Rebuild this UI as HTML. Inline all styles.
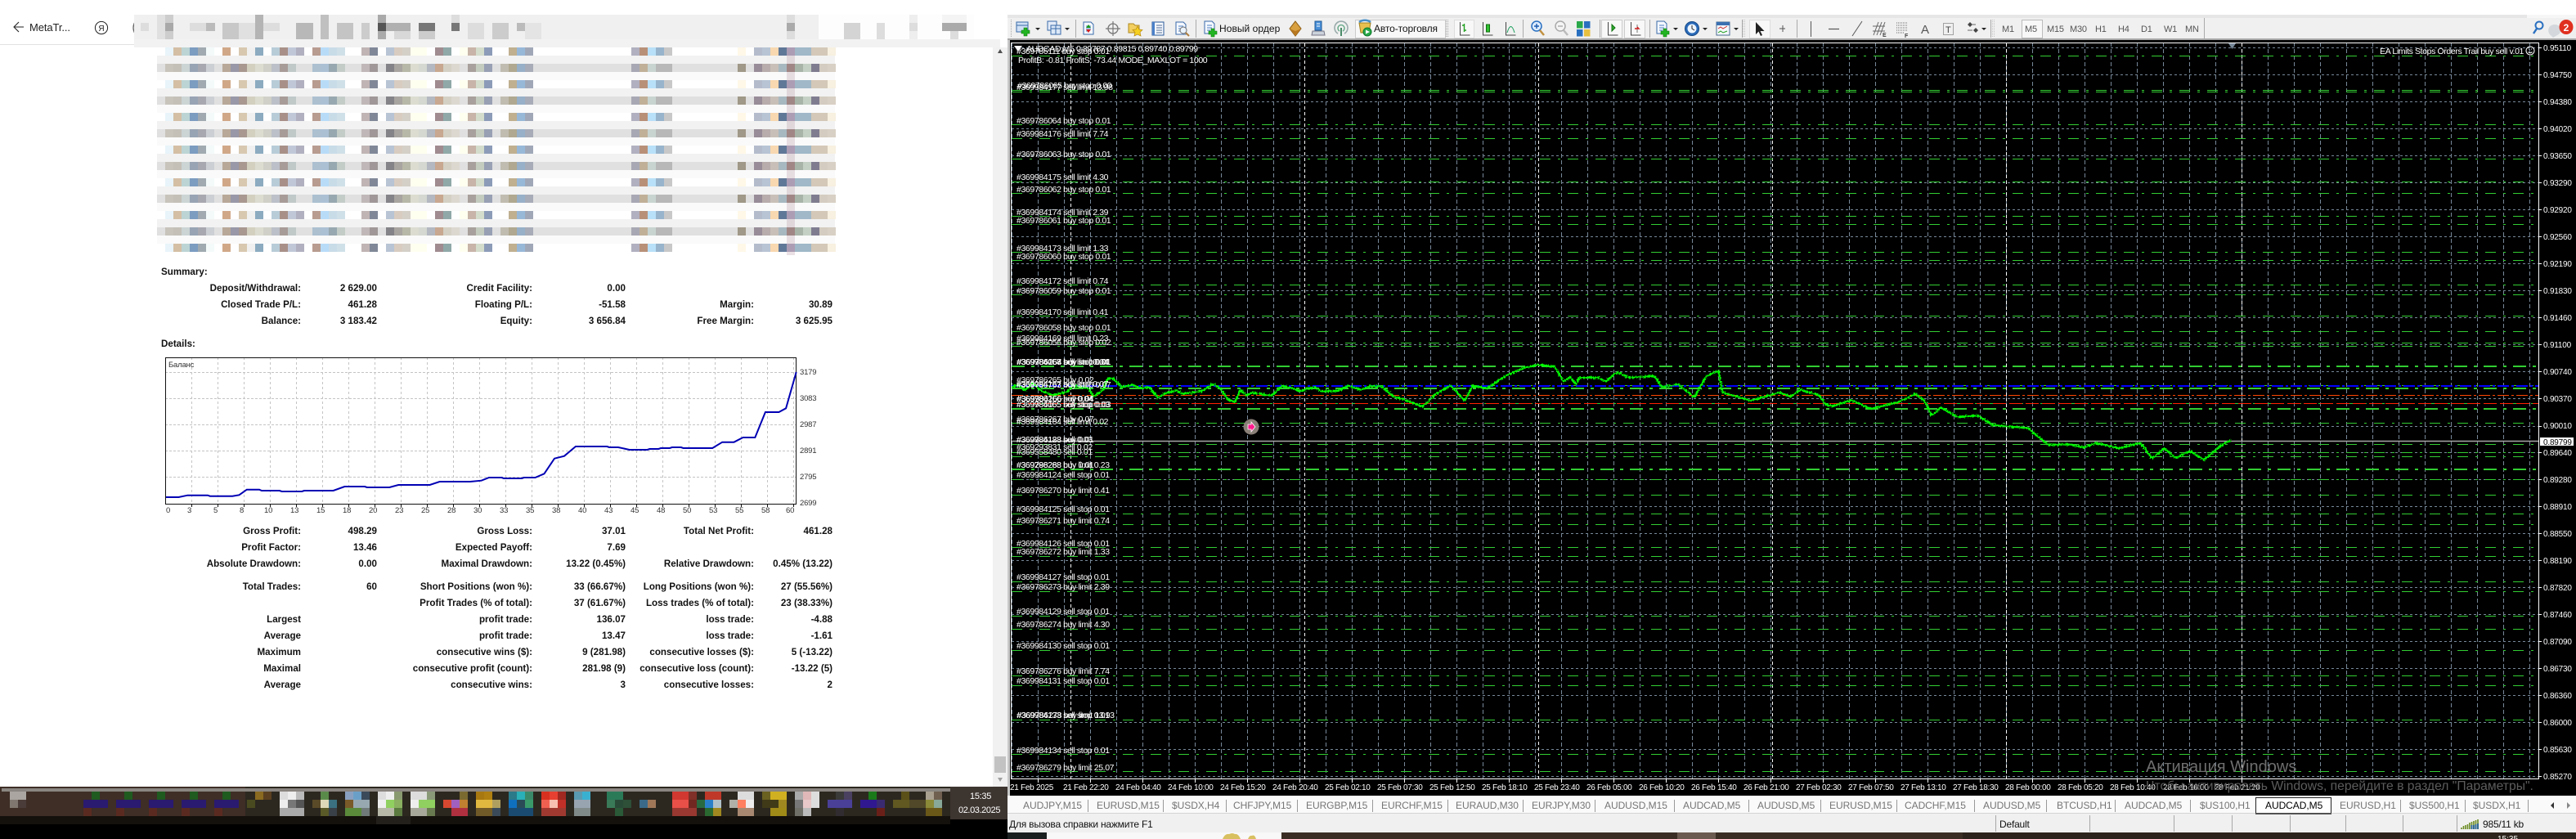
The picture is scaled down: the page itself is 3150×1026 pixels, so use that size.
<!DOCTYPE html>
<html lang="ru"><head><meta charset="utf-8"><title>MetaTrader</title>
<style>
html,body{margin:0;padding:0;background:#fff;width:3150px;height:1026px;overflow:hidden}
svg{display:block}
text{font-family:"Liberation Sans",sans-serif}
.m rect{width:10px;height:10px}
.t10 rect{height:10px}
.b{font-weight:700;font-size:11.6px;fill:#111;text-anchor:end}
.bl{font-weight:700;font-size:11.6px;fill:#111}
.o{font-size:10.5px;fill:#fff;letter-spacing:-.38px}
.ax{font-size:10px;fill:#fff;letter-spacing:-.2px}
.tm{font-size:10px;fill:#fff;letter-spacing:-.28px}
.tab{font-size:12px;fill:#757575;letter-spacing:-.05px}
.tf{font-size:11px;fill:#555;letter-spacing:-.2px}
.eq{font-size:9.5px;fill:#333;letter-spacing:-.2px}
.ol{stroke:#32cd32;stroke-width:1;stroke-dasharray:13 9 3 9;fill:none}
.ok{stroke:#32cd32;stroke-width:2;stroke-dasharray:16 8 4 8;fill:none}
.sep{stroke:#aaa;stroke-width:1}
</style></head><body>
<svg width="3150" height="1026" viewBox="0 0 3150 1026" xmlns="http://www.w3.org/2000/svg">
<defs>
<g id="A" class="m">
<rect x="202" fill="#e8f4fa"/><rect x="212" fill="#d4bfa5"/><rect x="222" fill="#bcd4d4"/><rect x="232" fill="#7c9cc0"/><rect x="242" fill="#a0aab0"/><rect x="252" fill="#f4fafa"/><rect x="272" fill="#d0a888"/><rect x="292" fill="#d8c8b0"/><rect x="302" fill="#f0f0f0"/><rect x="312" fill="#8cabc0"/><rect x="332" fill="#b8ccd8"/><rect x="342" fill="#a89088"/><rect x="352" fill="#c0c8d8"/><rect x="362" fill="#b0b0c0"/><rect x="382" fill="#b89c90"/><rect x="392" fill="#b8dcf8"/><rect x="402" fill="#c8dce8"/><rect x="412" fill="#d0e0e8"/><rect x="442" fill="#c0b4b4"/><rect x="452" fill="#808898"/><rect x="472" fill="#b8c4d4"/><rect x="482" fill="#d8ccc0"/><rect x="492" fill="#d4d0c8"/><rect x="502" fill="#fffff0"/><rect x="512" fill="#fffff0"/><rect x="532" fill="#a08c90"/><rect x="542" fill="#90a8a8"/><rect x="562" fill="#fffff0"/><rect x="572" fill="#c8b4a8"/><rect x="582" fill="#d4dccc"/><rect x="592" fill="#8c9cb8"/><rect x="622" fill="#c0b090"/><rect x="632" fill="#98b8d8"/><rect x="642" fill="#a0a8b8"/><rect x="772" fill="#b0b0c0"/><rect x="782" fill="#b89078"/><rect x="792" fill="#b8e0f8"/><rect x="802" fill="#98b4cc"/><rect x="812" fill="#c8c8c8"/><rect x="902" fill="#fff8e8"/><rect x="922" fill="#b4bccc"/><rect x="932" fill="#b8c4d4"/><rect x="942" fill="#f8d8b0"/><rect x="952" fill="#607898"/><rect x="962" fill="#b0a8c0"/><rect x="972" fill="#a0b8c8"/><rect x="982" fill="#a0b8c8"/><rect x="992" fill="#d4c8b8"/><rect x="1002" fill="#d4c8b8"/><rect x="1012" fill="#f8f0e0"/>
</g>
<g id="B" class="m">
<rect x="202" fill="#c8c4bc"/><rect x="212" fill="#c4c0b8"/><rect x="222" fill="#ccd4d4"/><rect x="232" fill="#98a4b4"/><rect x="242" fill="#a8a8b0"/><rect x="252" fill="#ccd0d4"/><rect x="272" fill="#b8a898"/><rect x="282" fill="#9898a8"/><rect x="292" fill="#a89890"/><rect x="302" fill="#d4d0c0"/><rect x="312" fill="#dcdcd0"/><rect x="322" fill="#d0d0c8"/><rect x="332" fill="#bcc0c8"/><rect x="342" fill="#a89c98"/><rect x="352" fill="#c0c8c8"/><rect x="382" fill="#acc0d0"/><rect x="392" fill="#acc0d4"/><rect x="402" fill="#98a8b0"/><rect x="412" fill="#c4ccc8"/><rect x="442" fill="#c0b8b8"/><rect x="452" fill="#a09898"/><rect x="472" fill="#848488"/><rect x="482" fill="#a8a4a0"/><rect x="492" fill="#b8b8a8"/><rect x="502" fill="#dcdcd0"/><rect x="512" fill="#d4d8d0"/><rect x="522" fill="#b4b8c0"/><rect x="532" fill="#c8a890"/><rect x="542" fill="#d4d0c4"/><rect x="552" fill="#dcd8d0"/><rect x="572" fill="#a8a09c"/><rect x="582" fill="#c4ccc0"/><rect x="592" fill="#98a0b4"/><rect x="612" fill="#c0bcb0"/><rect x="622" fill="#b0a890"/><rect x="632" fill="#98b0c8"/><rect x="642" fill="#a8acb8"/><rect x="772" fill="#a8a8b4"/><rect x="782" fill="#c0b098"/><rect x="792" fill="#c8d4d0"/><rect x="802" fill="#b8b8b8"/><rect x="812" fill="#b8b8b8"/><rect x="902" fill="#a09888"/><rect x="922" fill="#988c98"/><rect x="932" fill="#b8acac"/><rect x="942" fill="#c8c0b8"/><rect x="952" fill="#a8b8c0"/><rect x="962" fill="#a08c84"/><rect x="972" fill="#a8b4a8"/><rect x="982" fill="#c4d0c4"/><rect x="992" fill="#807c90"/><rect x="1002" fill="#d4ccc0"/><rect x="1012" fill="#d8d0c4"/>
</g>
<g id="plus"><path d="M-2 -5h4v3h3v4h-3v3h-4v-3h-3v-4h3z" fill="#22b422" stroke="#0c7a0c" stroke-width=".6"/></g>
<g id="doc"><path d="M-6 -8h9l3 3v12h-12z" fill="#f4f8ff" stroke="#3a6aa8"/><path d="M-3 -3h6M-3 0h6M-3 3h4" stroke="#5080c0"/></g>
<pattern id="vg" x="1237" y="52" width="32" height="8" patternUnits="userSpaceOnUse"><path d="M.5 0v5" stroke="#778899"/></pattern>
<pattern id="vge" x="202" y="437" width="32" height="6" patternUnits="userSpaceOnUse"><path d="M.5 0v3" stroke="#c4c4c4"/></pattern>
<filter id="jit" x="-2%" y="-20%" width="104%" height="140%"><feTurbulence type="fractalNoise" baseFrequency=".55 .6" numOctaves="2" seed="4"/><feDisplacementMap in="SourceGraphic" scale="5" xChannelSelector="R" yChannelSelector="G"/></filter>
</defs>

<!-- page bg -->
<rect width="3150" height="1026" fill="#fff"/>

<!-- LEFT header -->
<path d="M0 54.5H164" stroke="#e2e2e2"/>
<path d="M29 33H18M23 27l-6 6 6 6" fill="none" stroke="#222" stroke-width="1.1"/>
<text x="36" y="38" font-size="13" fill="#222" letter-spacing="-.1">MetaTr...</text>
<circle cx="124" cy="34" r="7.6" fill="none" stroke="#222" stroke-width="1"/><text x="124" y="38" font-size="10" fill="#222" text-anchor="middle" font-family="Liberation Sans">Я</text>
<path d="M165 27q-4 7 0 14" fill="none" stroke="#666" stroke-width="1.3"/>
<rect x="164" y="18" width="837" height="30" fill="#f0f0f0"/>
<rect x="164" y="48" width="1059" height="10" fill="#f2f2f2"/>
<rect x="1001" y="18" width="190" height="30" fill="#fdfdfd"/>
<g>
<rect x="192" y="18" width="20" height="30" fill="#e0e0e0"/><rect x="202" y="28" width="10" height="10" fill="#888"/><rect x="202" y="18" width="10" height="30" fill="#c0c0c0" opacity=".6"/>
<rect x="172" y="28" width="10" height="10" fill="#ddd"/><rect x="232" y="28" width="30" height="10" fill="#ddd"/><rect x="252" y="28" width="11" height="10" fill="#bbb"/>
<rect x="272" y="28" width="20" height="20" fill="#c8c8c8"/><rect x="292" y="28" width="20" height="20" fill="#e0e0e0"/><rect x="312" y="18" width="10" height="30" fill="#b4b4b4"/><rect x="322" y="28" width="20" height="10" fill="#ddd"/>
<rect x="362" y="28" width="21" height="20" fill="#b8b8b8"/><rect x="392" y="18" width="10" height="30" fill="#c0c0c0"/><rect x="412" y="28" width="20" height="20" fill="#c4c4c4"/><rect x="442" y="28" width="10" height="20" fill="#ccc"/>
<rect x="462" y="18" width="10" height="30" fill="#aaa"/><rect x="462" y="28" width="10" height="10" fill="#555"/><rect x="472" y="28" width="30" height="10" fill="#b0b0b0"/><rect x="482" y="38" width="20" height="10" fill="#d8d8d8"/>
<rect x="512" y="28" width="20" height="20" fill="#ccc"/><rect x="512" y="28" width="20" height="10" fill="#777"/><rect x="552" y="18" width="10" height="10" fill="#ddd"/><rect x="552" y="28" width="10" height="10" fill="#777"/>
<rect x="572" y="28" width="20" height="20" fill="#ddd"/><rect x="602" y="28" width="20" height="20" fill="#ccc"/><rect x="632" y="28" width="10" height="10" fill="#bbb"/><rect x="642" y="28" width="20" height="20" fill="#e4e4e4"/>
<rect x="962" y="18" width="10" height="30" fill="#ddd"/><rect x="962" y="28" width="10" height="10" fill="#aaa"/>
<rect x="1032" y="28" width="20" height="20" fill="#d4d4d4"/><rect x="1072" y="28" width="10" height="20" fill="#ddd"/><rect x="1112" y="18" width="10" height="30" fill="#eee"/><rect x="1112" y="28" width="10" height="10" fill="#ddd"/>
<rect x="1152" y="18" width="30" height="10" fill="#f4f4f4"/><rect x="1152" y="28" width="30" height="10" fill="#aaa"/><rect x="1162" y="38" width="10" height="10" fill="#ddd"/>
</g>

<!-- LEFT mosaic -->
<rect x="192" y="68" width="829" height="10" fill="#f2f2f2"/><rect x="192" y="78" width="829" height="10" fill="#e0e0e0"/><rect x="192" y="88" width="829" height="10" fill="#fafafa"/>
<rect x="192" y="108" width="829" height="10" fill="#f2f2f2"/>
<rect x="192" y="118" width="829" height="10" fill="#e0e0e0"/><rect x="192" y="128" width="829" height="10" fill="#fafafa"/>
<rect x="192" y="148" width="829" height="10" fill="#f2f2f2"/><rect x="192" y="158" width="829" height="10" fill="#e0e0e0"/><rect x="192" y="168" width="829" height="10" fill="#fafafa"/>
<rect x="192" y="188" width="829" height="10" fill="#f2f2f2"/><rect x="192" y="198" width="829" height="10" fill="#e0e0e0"/><rect x="192" y="208" width="829" height="10" fill="#fafafa"/>
<rect x="192" y="228" width="829" height="10" fill="#f2f2f2"/><rect x="192" y="238" width="829" height="10" fill="#e0e0e0"/><rect x="192" y="248" width="829" height="10" fill="#fafafa"/>
<rect x="192" y="268" width="829" height="10" fill="#f2f2f2"/><rect x="192" y="278" width="829" height="10" fill="#e0e0e0"/><rect x="192" y="288" width="829" height="10" fill="#fafafa"/>
<use href="#A" y="58"/><use href="#A" y="98"/><use href="#A" y="138"/><use href="#A" y="178"/><use href="#A" y="218"/><use href="#A" y="258"/><use href="#A" y="298"/>
<use href="#B" y="78"/><use href="#B" y="118"/><use href="#B" y="158"/><use href="#B" y="198"/><use href="#B" y="238"/><use href="#B" y="278"/>
<rect x="962" y="58" width="10" height="254" fill="#a07888" opacity=".22"/>

<!-- LEFT scrollbar -->
<rect x="1214" y="58" width="18" height="904" fill="#f1f1f1"/>
<path d="M1223 60l-3 5h6z" fill="#505050"/>
<rect x="1216" y="925" width="14" height="20" fill="#c2c2c2"/>
<path d="M1220 951h6l-3 5z" fill="#a0a0a0"/>

<!-- Summary -->
<text class="bl" x="197" y="336">Summary:</text>
<text class="b" x="368" y="356">Deposit/Withdrawal:</text><text class="b" x="461" y="356">2 629.00</text>
<text class="b" x="651" y="356">Credit Facility:</text><text class="b" x="765" y="356">0.00</text>
<text class="b" x="368" y="376">Closed Trade P/L:</text><text class="b" x="461" y="376">461.28</text>
<text class="b" x="651" y="376">Floating P/L:</text><text class="b" x="765" y="376">-51.58</text>
<text class="b" x="922" y="376">Margin:</text><text class="b" x="1018" y="376">30.89</text>
<text class="b" x="368" y="396">Balance:</text><text class="b" x="461" y="396">3 183.42</text>
<text class="b" x="651" y="396">Equity:</text><text class="b" x="765" y="396">3 656.84</text>
<text class="b" x="922" y="396">Free Margin:</text><text class="b" x="1018" y="396">3 625.95</text>
<text class="bl" x="197" y="424">Details:</text>

<!-- Equity chart -->
<rect x="202" y="437" width="772" height="179" fill="url(#vge)"/>
<path d="M202 455.5H974M202 487.5H974M202 519.5H974M202 551.5H974M202 583.5H974" stroke="#c4c4c4" stroke-dasharray="3 2"/>
<rect x="202.5" y="437.5" width="771" height="179" fill="none" stroke="#111"/>
<path d="M234.5 617v3M266.5 617v3M298.5 617v3M330.5 617v3M362.5 617v3M394.5 617v3M426.5 617v3M458.5 617v3M490.5 617v3M522.5 617v3M554.5 617v3M586.5 617v3M618.5 617v3M650.5 617v3M682.5 617v3M714.5 617v3M746.5 617v3M778.5 617v3M810.5 617v3M842.5 617v3M874.5 617v3M906.5 617v3M938.5 617v3M970.5 617v3" stroke="#111"/>
<polyline fill="none" stroke="#0000b4" stroke-width="2" points="203,608 218.4,608 229.4,605.7 254,605.7 256.8,606.7 284.2,606.7 292.5,605.3 301.8,598.7 317.1,598.7 319.9,600 341.8,600 344.6,601 369.2,601 372,600 407.6,600 421.4,595 446,595 448.8,596 476.2,596 487.2,593 525.6,593 537.6,589 575,589 588.7,587.7 598,584 613.4,584 616.1,585 638,585 640.8,584 654.5,584 665.5,579.3 678,560.7 690,557.7 703.9,546 742.3,546 745,547 756,547 769.7,550 791.6,550 794.4,549 805.3,549 808.1,548 819,548 821.8,547 832.8,547 835.5,548 871.2,548 883.2,540.7 897.5,540.7 908.5,535 923.3,535 935.9,504 952.4,504 961.1,499.3 973.7,455"/>
<text class="eq" x="206" y="449">Баланс</text>
<g class="eq">
<text class="eq" x="978" y="458">3179</text><text class="eq" x="978" y="490">3083</text><text class="eq" x="978" y="522">2987</text><text class="eq" x="978" y="554">2891</text><text class="eq" x="978" y="586">2795</text><text class="eq" x="978" y="618">2699</text>
<text class="eq" x="203" y="627">0</text><text class="eq" x="229" y="627">3</text><text class="eq" x="261" y="627">5</text><text class="eq" x="293" y="627">8</text><text class="eq" x="323" y="627">10</text><text class="eq" x="355" y="627">13</text><text class="eq" x="387" y="627">15</text><text class="eq" x="419" y="627">18</text><text class="eq" x="451" y="627">20</text><text class="eq" x="483" y="627">23</text><text class="eq" x="515" y="627">25</text><text class="eq" x="547" y="627">28</text><text class="eq" x="579" y="627">30</text><text class="eq" x="611" y="627">33</text><text class="eq" x="643" y="627">35</text><text class="eq" x="675" y="627">38</text><text class="eq" x="707" y="627">40</text><text class="eq" x="739" y="627">43</text><text class="eq" x="771" y="627">45</text><text class="eq" x="803" y="627">48</text><text class="eq" x="835" y="627">50</text><text class="eq" x="867" y="627">53</text><text class="eq" x="899" y="627">55</text><text class="eq" x="931" y="627">58</text><text class="eq" x="961" y="627">60</text>
</g>

<!-- Stats -->
<text class="b" x="368" y="653">Gross Profit:</text><text class="b" x="461" y="653">498.29</text><text class="b" x="651" y="653">Gross Loss:</text><text class="b" x="765" y="653">37.01</text><text class="b" x="922" y="653">Total Net Profit:</text><text class="b" x="1018" y="653">461.28</text>
<text class="b" x="368" y="673">Profit Factor:</text><text class="b" x="461" y="673">13.46</text><text class="b" x="651" y="673">Expected Payoff:</text><text class="b" x="765" y="673">7.69</text>
<text class="b" x="368" y="693">Absolute Drawdown:</text><text class="b" x="461" y="693">0.00</text><text class="b" x="651" y="693">Maximal Drawdown:</text><text class="b" x="765" y="693">13.22 (0.45%)</text><text class="b" x="922" y="693">Relative Drawdown:</text><text class="b" x="1018" y="693">0.45% (13.22)</text>
<text class="b" x="368" y="721">Total Trades:</text><text class="b" x="461" y="721">60</text><text class="b" x="651" y="721">Short Positions (won %):</text><text class="b" x="765" y="721">33 (66.67%)</text><text class="b" x="922" y="721">Long Positions (won %):</text><text class="b" x="1018" y="721">27 (55.56%)</text>
<text class="b" x="651" y="741">Profit Trades (% of total):</text><text class="b" x="765" y="741">37 (61.67%)</text><text class="b" x="922" y="741">Loss trades (% of total):</text><text class="b" x="1018" y="741">23 (38.33%)</text>
<text class="b" x="368" y="761">Largest</text><text class="b" x="651" y="761">profit trade:</text><text class="b" x="765" y="761">136.07</text><text class="b" x="922" y="761">loss trade:</text><text class="b" x="1018" y="761">-4.88</text>
<text class="b" x="368" y="781">Average</text><text class="b" x="651" y="781">profit trade:</text><text class="b" x="765" y="781">13.47</text><text class="b" x="922" y="781">loss trade:</text><text class="b" x="1018" y="781">-1.61</text>
<text class="b" x="368" y="801">Maximum</text><text class="b" x="651" y="801">consecutive wins ($):</text><text class="b" x="765" y="801">9 (281.98)</text><text class="b" x="922" y="801">consecutive losses ($):</text><text class="b" x="1018" y="801">5 (-13.22)</text>
<text class="b" x="368" y="821">Maximal</text><text class="b" x="651" y="821">consecutive profit (count):</text><text class="b" x="765" y="821">281.98 (9)</text><text class="b" x="922" y="821">consecutive loss (count):</text><text class="b" x="1018" y="821">-13.22 (5)</text>
<text class="b" x="368" y="841">Average</text><text class="b" x="651" y="841">consecutive wins:</text><text class="b" x="765" y="841">3</text><text class="b" x="922" y="841">consecutive losses:</text><text class="b" x="1018" y="841">2</text>

<!-- LEFT taskbar -->
<rect x="0" y="962" width="300" height="36" fill="#3e2e26"/><rect x="300" y="962" width="862" height="36" fill="#2c2820"/>
<rect x="0" y="998" width="1162" height="10" fill="#14100c"/><rect x="0" y="1008" width="1232" height="18" fill="#000"/>
<rect x="2" y="964" width="1160" height="4" fill="#8a8580"/>
<rect x="460" y="998" width="42" height="10" fill="#23201c"/>
<rect x="1162" y="962" width="70" height="40" fill="#3d3530"/><rect x="1162" y="1002" width="70" height="6" fill="#000"/>
<text x="1186" y="977" font-size="11" fill="#fff" letter-spacing="-.3">15:35</text>
<text x="1172" y="994" font-size="11" fill="#fff" letter-spacing="-.4">02.03.2025</text>
<g class="t10">
<g transform="translate(0,968)">
<rect x="12" width="20" fill="#aaa5a0"/><rect x="112" width="10" fill="#1f5a1f"/><rect x="152" width="10" fill="#1f5a1f"/><rect x="192" width="10" fill="#1f5a1f"/><rect x="232" width="10" fill="#1f5a1f"/><rect x="272" width="10" fill="#1f5a1f"/><rect x="312" width="10" fill="#8a6a20"/><rect x="322" width="10" fill="#5a4020"/><rect x="342" width="10" fill="#ddd"/><rect x="352" width="10" fill="#eee"/><rect x="362" width="10" fill="#bbb"/><rect x="392" width="10" fill="#5a8a4a"/><rect x="422" width="10" fill="#8aa0c0"/><rect x="432" width="10" fill="#6aa0c8"/><rect x="442" width="10" fill="#3a4a5a"/><rect x="462" width="10" fill="#ddd"/><rect x="472" width="10" fill="#eee"/><rect x="482" width="10" fill="#8a9a70"/><rect x="502" width="20" fill="#ddd"/><rect x="522" width="10" fill="#8a9a78"/><rect x="562" width="10" fill="#7a6a30"/><rect x="582" width="10" fill="#a87810"/><rect x="592" width="10" fill="#b08010"/><rect x="622" width="10" fill="#2a7a8a"/><rect x="632" width="10" fill="#2ab0b8"/><rect x="642" width="10" fill="#3a8a6a"/><rect x="662" width="10" fill="#d83020"/><rect x="672" width="10" fill="#e84030"/><rect x="682" width="10" fill="#a02820"/><rect x="702" width="10" fill="#5a9ab0"/><rect x="712" width="10" fill="#3ab0d0"/><rect x="742" width="20" fill="#2a7a58"/><rect x="822" width="20" fill="#d03830"/><rect x="842" width="10" fill="#803028"/><rect x="862" width="20" fill="#c03828"/><rect x="902" width="20" fill="#ddd"/><rect x="932" width="10" fill="#6a6020"/><rect x="942" width="20" fill="#d0b020"/><rect x="972" width="10" fill="#aaa"/><rect x="982" width="10" fill="#e0b8b8"/><rect x="992" width="10" fill="#ddd"/><rect x="1022" width="10" fill="#3a3a38"/><rect x="1032" width="10" fill="#4a4060"/><rect x="1062" width="10" fill="#1a7a1a"/><rect x="1102" width="10" fill="#5a5018"/><rect x="1132" width="10" fill="#aaa090"/><rect x="1142" width="10" fill="#706050"/>
</g>
<g transform="translate(0,978)">
<rect x="12" width="10" fill="#807870"/><rect x="22" width="10" fill="#4a3c38"/><rect x="102" width="30" fill="#2a1a70"/><rect x="142" width="30" fill="#2a1a70"/><rect x="182" width="30" fill="#2a1a70"/><rect x="222" width="30" fill="#2a1a70"/><rect x="262" width="30" fill="#2a1a70"/><rect x="302" width="10" fill="#4a4a20"/><rect x="342" width="10" fill="#eee"/><rect x="352" width="10" fill="#777"/><rect x="362" width="10" fill="#555"/><rect x="382" width="10" fill="#5a4a28"/><rect x="392" width="10" fill="#ddd8b8"/><rect x="402" width="10" fill="#3a7080"/><rect x="422" width="10" fill="#7a5a28"/><rect x="432" width="20" fill="#98a8b0"/><rect x="462" width="10" fill="#eee"/><rect x="472" width="10" fill="#90d060"/><rect x="482" width="10" fill="#8ab060"/><rect x="502" width="10" fill="#eee"/><rect x="512" width="20" fill="#90d060"/><rect x="542" width="10" fill="#d84830"/><rect x="552" width="10" fill="#a060c0"/><rect x="562" width="10" fill="#c08030"/><rect x="582" width="20" fill="#e0b840"/><rect x="602" width="10" fill="#b0a060"/><rect x="622" width="10" fill="#1070c0"/><rect x="632" width="10" fill="#2a4a58"/><rect x="642" width="10" fill="#3a9a6a"/><rect x="662" width="10" fill="#f06050"/><rect x="672" width="10" fill="#f8c0b0"/><rect x="682" width="10" fill="#c03028"/><rect x="702" width="20" fill="#98a4b0"/><rect x="742" width="10" fill="#3a7a58"/><rect x="752" width="10" fill="#2a4a38"/><rect x="762" width="10" fill="#2e5038"/><rect x="782" width="10" fill="#3a6a88"/><rect x="792" width="10" fill="#a07858"/><rect x="822" width="20" fill="#e85048"/><rect x="842" width="10" fill="#702820"/><rect x="852" width="10" fill="#2a6a40"/><rect x="862" width="10" fill="#2a80c8"/><rect x="872" width="10" fill="#b0c0c8"/><rect x="892" width="10" fill="#b0b0a8"/><rect x="902" width="10" fill="#ff8060"/><rect x="912" width="10" fill="#eee"/><rect x="932" width="20" fill="#403a18"/><rect x="952" width="10" fill="#a08820"/><rect x="972" width="10" fill="#777"/><rect x="982" width="10" fill="#e8c8c8"/><rect x="992" width="10" fill="#ddd"/><rect x="1012" width="30" fill="#4a4098"/><rect x="1052" width="20" fill="#301890"/><rect x="1072" width="10" fill="#3a2a70"/><rect x="1092" width="20" fill="#605820"/><rect x="1112" width="20" fill="#504828"/><rect x="1132" width="10" fill="#8a8a38"/><rect x="1142" width="10" fill="#88a898"/>
</g>
<g transform="translate(0,988)">
<rect x="102" width="10" fill="#5a2a20"/><rect x="142" width="10" fill="#5a2a20"/><rect x="182" width="10" fill="#5a2a20"/><rect x="222" width="10" fill="#5a2a20"/><rect x="262" width="10" fill="#5a2a20"/><rect x="342" width="30" fill="#aaa"/><rect x="392" width="10" fill="#5a5a28"/><rect x="402" width="10" fill="#3a4048"/><rect x="422" width="20" fill="#5a8a3a"/><rect x="442" width="10" fill="#707a78"/><rect x="462" width="20" fill="#b8b8a8"/><rect x="482" width="10" fill="#5a7a40"/><rect x="502" width="20" fill="#a8a89a"/><rect x="522" width="10" fill="#6a7a50"/><rect x="552" width="20" fill="#b03040"/><rect x="582" width="20" fill="#705a28"/><rect x="602" width="10" fill="#3a4a58"/><rect x="622" width="30" fill="#1a4a70"/><rect x="662" width="30" fill="#a03a30"/><rect x="702" width="20" fill="#808a88"/><rect x="752" width="10" fill="#2a5a38"/><rect x="822" width="30" fill="#983830"/><rect x="862" width="10" fill="#2a6a30"/><rect x="872" width="10" fill="#a08820"/><rect x="902" width="20" fill="#a88870"/><rect x="942" width="20" fill="#a08a18"/><rect x="972" width="10" fill="#707068"/><rect x="982" width="10" fill="#bbb"/><rect x="1022" width="10" fill="#302c30"/><rect x="1072" width="10" fill="#6a2018"/><rect x="1132" width="20" fill="#6a5818"/>
</g>
</g>

<!-- RIGHT window -->
<rect x="1232" y="18" width="1918" height="1000" fill="#f0f0f0"/>
<rect x="1232" y="18" width="1918" height="4" fill="#e6e6e6"/>
<rect x="3090" y="18" width="60" height="4" fill="#f6f6f6"/>
<rect x="1232" y="47" width="1918" height="2" fill="#a8a8a8"/>

<!-- toolbar separators -->
<path d="M1236.5 24v22M1768.5 24v22M1770.5 24v22" class="sep" stroke-dasharray="1 1"/>
<path d="M1315.5 24v22M1462.5 24v22M1862.5 24v22M1956.5 24v22M2017.5 24v22M2130.5 24v22M2197.5 24v22M2434.5 24v22M2695.5 22v25" class="sep"/>
<path d="M2131.5 24v22M2133.5 24v22M2436.5 24v22M2438.5 24v22" stroke="#c4c4c4" stroke-dasharray="1 1"/>

<!-- toolbar icons -->
<g transform="translate(1251,34)"><rect x="-8" y="-7" width="14" height="12" fill="#cfe0f5" stroke="#3a6aa8"/><path d="M-8 -3h14" stroke="#3a6aa8"/><use href="#plus" x="3" y="5"/></g><path d="M1266 34h6l-3 3z" fill="#222"/>
<g transform="translate(1289,34)"><rect x="-8" y="-8" width="11" height="11" fill="#e4ecf8" stroke="#3a6aa8"/><rect x="-4" y="-3" width="12" height="11" fill="#dce8f8" stroke="#3a6aa8"/><path d="M-4 1h12M2 -3v11" stroke="#3a6aa8"/></g><path d="M1302 34h6l-3 3z" fill="#222"/>
<g transform="translate(1331,35)"><use href="#doc"/><path d="M-3 -1l3-4 3 4z" fill="#1a9a1a"/><path d="M-3 1l3 4 3-4z" fill="#d02020"/></g>
<g transform="translate(1361,35)"><circle r="6" fill="none" stroke="#777" stroke-width="1.3"/><path d="M0 -9v18M-9 0h18" stroke="#777" stroke-width="1.2"/></g>
<g transform="translate(1388,35)"><path d="M-8 -6h6l2 2h5v9h-13z" fill="#f2cf60" stroke="#b08a20"/><path d="M3 -3l2 4 4 .5-3 3 1 4.5-4-2-4 2 1-4.5-3-3 4-.5z" fill="#f6d020" stroke="#b88a10" stroke-width=".7"/></g>
<g transform="translate(1416,35)"><rect x="-7" y="-8" width="14" height="16" fill="#f8fbff" stroke="#2a5a98"/><rect x="-7" y="-8" width="3" height="16" fill="#4a80c8"/><path d="M-2 -4h7M-2 -1h7M-2 2h7M-2 5h7" stroke="#506a90"/></g>
<g transform="translate(1445,35)"><use href="#doc" x="-1"/><circle cx="2" cy="2" r="4" fill="#eaf4ff" stroke="#707070"/><path d="M5 5l4 4" stroke="#b08040" stroke-width="2"/></g>
<g transform="translate(1480,34)"><use href="#doc" x="-1"/><use href="#plus" x="3" y="6"/></g>
<text x="1491" y="39" font-size="12" fill="#111" letter-spacing=".05">Новый ордер</text>
<g transform="translate(1584,35)"><path d="M0 -9l7 9-7 9-7-9z" fill="#d8a040" stroke="#8a5a10"/><path d="M-7 0l7 9 7-9-7 3z" fill="#b87820"/></g>
<g transform="translate(1612,35)"><rect x="-4" y="-9" width="8" height="11" fill="#4a90d8" stroke="#205a98"/><path d="M-2 -6h4M-2 -3h4" stroke="#fff"/><path d="M-7 3h14l1 5h-16z" fill="#ccd2da" stroke="#778"/></g>
<g transform="translate(1640,35)"><path d="M-4 6a8 8 0 1 1 8 0" fill="none" stroke="#9aa" stroke-width="1.6"/><path d="M-2 3a4 4 0 1 1 4 0" fill="none" stroke="#6a8" stroke-width="1.4"/><path d="M0 -1v10" stroke="#4a8a68" stroke-width="2"/></g>
<rect x="1657.5" y="24.5" width="110" height="22" fill="#f8f8f8" stroke="#ccc"/>
<g transform="translate(1669,35)"><path d="M-7 -7h14l-2 12h-10z" fill="#e8c050" stroke="#a08020"/><path d="M-7 -8c4-3 10-3 14 0" fill="none" stroke="#4a90c8" stroke-width="2.5"/><circle cx="3" cy="4" r="5" fill="#2aa84a" stroke="#0c7a2a"/><path d="M1 1.5l5 2.5-5 2.5z" fill="#fff"/></g>
<text x="1680" y="39" font-size="12" fill="#111" letter-spacing="-.1">Авто-торговля</text>
<rect x="1778.5" y="24.5" width="24" height="22" fill="#f8f8f8" stroke="#ddd"/><rect x="1958.5" y="24.5" width="25" height="22" fill="#f8f8f8" stroke="#ccc"/><rect x="1986.5" y="24.5" width="25" height="22" fill="#f8f8f8" stroke="#ccc"/><rect x="2139.5" y="24.5" width="25" height="22" fill="#f8f8f8" stroke="#ddd"/>
<g stroke="#444" fill="none"><path d="M1785.5 27v16h12"/><path d="M1790.5 29v10M1788 31h2.500M1790.500 37h2.500" stroke="#20a020" stroke-width="1.4"/><path d="M1813.500 27v16h12"/><rect x="1817.500" y="30" width="4" height="9" fill="#30c030" stroke="#107010"/><path d="M1841.500 27v16h12"/><path d="M1843 40c3-10 6-10 9 0" stroke="#20a060"/></g>
<g transform="translate(1880,34)"><circle cx="-1" cy="-2" r="6" fill="#dcecff" stroke="#2a70c0" stroke-width="1.5"/><path d="M-4 -2h6M-1 -5v6" stroke="#1a5ab0" stroke-width="1.4"/><path d="M3 3l5 6" stroke="#c09040" stroke-width="2.5"/></g>
<g transform="translate(1909,34)"><circle cx="-1" cy="-2" r="6" fill="#f4f4f4" stroke="#aaa" stroke-width="1.5"/><path d="M-4 -2h6" stroke="#aaa" stroke-width="1.4"/><path d="M3 3l5 6" stroke="#bbb" stroke-width="2.500"/></g>
<g transform="translate(1936,35)"><rect x="-8" y="-9" width="7.500" height="8.500" fill="#2aa84a"/><rect x="1" y="-9" width="7.500" height="8.500" fill="#2a70c0"/><rect x="-8" y="1" width="7.500" height="8.500" fill="#2a70c0"/><rect x="1" y="1" width="7.500" height="8.500" fill="#e8c040"/></g>
<g stroke="#444" fill="none"><path d="M1966.500 27v16h12"/><path d="M1971 30l4 4-4 4z" fill="#30b030" stroke="#107010"/><path d="M1994.500 27v16h12"/><path d="M2002 30v10" stroke="#777"/><path d="M1999 35h5l-2-2" stroke="#d02020" stroke-width="1.400"/></g>
<g transform="translate(2033,34)"><use href="#doc" x="-1"/><use href="#plus" x="3" y="6"/></g><path d="M2046 34h6l-3 3z" fill="#222"/>
<g transform="translate(2069,35)"><circle r="8.500" fill="#2a6ab8" stroke="#174a88"/><circle r="5.500" fill="#eef6ff"/><path d="M0 -4v4l3 2" stroke="#222" fill="none"/></g><path d="M2082 34h6l-3 3z" fill="#222"/>
<g transform="translate(2107,35)"><rect x="-8" y="-8" width="16" height="16" fill="#f4f8fc" stroke="#4a6a90"/><rect x="-8" y="-8" width="16" height="4" fill="#3a70b0"/><path d="M-6 0l3-2 3 2 5-3" stroke="#d03030" fill="none"/><path d="M-6 5l3-2 3 2 5-2" stroke="#20a020" fill="none"/></g><path d="M2120 34h6l-3 3z" fill="#222"/>
<path d="M2147 27v15l3.500-3.500 2.500 5.500 2-1-2.500-5h5z" fill="#222"/>
<path d="M2176 35h7M2180 31v8" stroke="#555"/>
<path d="M2214.500 26v19" stroke="#555"/><path d="M2236 35.500h13" stroke="#555" stroke-width="1.200"/><path d="M2265 44l12-18" stroke="#555"/>
<path d="M2291 43l6-16M2295 43l6-16M2299 43l6-16M2290 32h15M2290 38h15" stroke="#666"/><text x="2302" y="45" font-size="7" fill="#444" font-weight="700">E</text>
<path d="M2319 28h14M2319 31h14M2319 34h14M2319 37h14M2319 40h9" stroke="#666" stroke-dasharray="1 1"/><text x="2329" y="46" font-size="7" fill="#444" font-weight="700">F</text>
<text x="2349" y="41" font-size="15" fill="#555">A</text>
<rect x="2376.500" y="28.500" width="12" height="14" fill="none" stroke="#555" stroke-dasharray="1 1"/><text x="2379" y="40" font-size="11" fill="#444">T</text>
<path d="M2406 30l3-3 3 3-3 3zM2413 37l3-3 3 3-3 3z" fill="#444"/><path d="M2406 37h6M2412 30h4" stroke="#666"/><path d="M2423 34h6l-3 3z" fill="#222"/>

<!-- timeframes -->
<rect x="2472.500" y="24.500" width="25" height="22" fill="#f8f8f8" stroke="#bbb"/>
<text class="tf" x="2448" y="39">M1</text><text class="tf" x="2476" y="39">M5</text><text class="tf" x="2503" y="39">M15</text><text class="tf" x="2531" y="39">M30</text><text class="tf" x="2562" y="39">H1</text><text class="tf" x="2590" y="39">H4</text><text class="tf" x="2618" y="39">D1</text><text class="tf" x="2646" y="39">W1</text><text class="tf" x="2672" y="39">MN</text>

<!-- search and notify -->
<g transform="translate(3104,34)"><circle cx="1" cy="-3" r="4.500" fill="none" stroke="#2a70c0" stroke-width="2"/><path d="M-2 1l-4 6" stroke="#2a70c0" stroke-width="2.400"/></g>
<path d="M3120 44c-6-4-5-14 4-14 8 0 10 10 3 13l-5 3z" fill="#d4d8dc"/>
<ellipse cx="3138" cy="33" rx="8.500" ry="9" fill="#e03020"/><text x="3138" y="38" font-size="12" font-weight="700" fill="#fff" text-anchor="middle">2</text>

<!-- CHART -->
<rect x="1232" y="49" width="4" height="925" fill="#c8c8c8"/>
<rect x="1235" y="49" width="1915" height="924" fill="#000"/>
<rect x="1237" y="53" width="1867" height="899" fill="url(#vg)"/>
<path d="M1237 58.500H3104M1237 91.500H3104M1237 124.500H3104M1237 157.500H3104M1237 190.500H3104M1237 223.500H3104M1237 256.500H3104M1237 289.500H3104M1237 322.500H3104M1237 355.500H3104M1237 388.500H3104M1237 421.500H3104M1237 454.500H3104M1237 487.500H3104M1237 521.500H3104M1237 553.500H3104M1237 586.500H3104M1237 619.500H3104M1237 652.500H3104M1237 685.500H3104M1237 718.500H3104M1237 751.500H3104M1237 784.500H3104M1237 817.500H3104M1237 850.500H3104M1237 883.500H3104M1237 916.500H3104M1237 949.500H3104" stroke="#778899" stroke-dasharray="3 3"/>
<path d="M1309.500 53V952M1595.500 53V952M1881.500 53V952M2167.500 53V952M2453.500 53V952M2741.500 53V952" stroke="#fff" stroke-dasharray="4 3"/>
<!-- green order lines -->
<path class="ol" d="M1237 68.500H3104M1237 110.500H3104M1237 112.500H3104M1237 152.500H3104M1237 169.500H3104M1237 194.500H3104M1237 222.500H3104M1237 236.500H3104M1237 264.500H3104M1237 274.500H3104M1237 308.500H3104M1237 318.500H3104M1237 348.500H3104M1237 360.500H3104M1237 386.500H3104M1237 405.500H3104M1237 419.500H3104M1237 423.500H3104M1237 471.500H3104M1237 493.500H3104M1237 517.500H3104M1237 543.500H3104M1237 553.500H3104M1237 558.500H3104M1237 586.500H3104M1237 605.500H3104M1237 628.500H3104M1237 641.500H3104M1237 669.500H3104M1237 680.500H3104M1237 711.500H3104M1237 723.500H3104M1237 753.500H3104M1237 769.500H3104M1237 795.500H3104M1237 826.500H3104M1237 838.500H3104M1237 880.500H3104M1237 922.500H3104M1237 943.500H3104"/>
<path class="ok" d="M1237 448H3104M1237 475H3104M1237 500H3104M1237 574H3104"/>
<path d="M1237 472H3104" stroke="#0000ff" stroke-width="2" stroke-dasharray="14 3 3 3"/>
<path d="M1237 483.500H3104" stroke="#ff4500" stroke-dasharray="14 3 3 3"/>
<path d="M1237 493.500H3104" stroke="#ff2000" stroke-dasharray="16 4"/>
<path d="M1237 539.500H3104" stroke="#a8a8a8" stroke-width="1.400"/>
<!-- price -->
<polyline filter="url(#jit)" fill="none" stroke="#00ff00" stroke-width="2.400" stroke-linejoin="bevel" points="1237,473.300 1245,470.700 1253.500,477.300 1262.400,468.300 1273.600,478.300 1287,483.300 1304.800,479.300 1311.500,471.700 1331.600,475 1337,485 1349.500,476.700 1354,463.300 1360.600,462.700 1371.800,473.300 1385,470.700 1396.300,475 1405,473.300 1416.400,486.700 1423,481.700 1438.800,477.300 1445.400,481.700 1470,478.300 1483.400,469.300 1492.300,475 1501.300,488.300 1510,491.700 1516.900,476.700 1523.600,483.300 1532.500,480 1554.800,484 1568.200,471.700 1583.800,476 1588.300,478.300 1608.400,473.300 1615,478.300 1635.200,478.300 1648.600,471.700 1664.200,476.700 1675.400,472.300 1688.800,472.300 1704.400,485 1715.500,488.300 1740,497.300 1755.700,481.700 1773.600,471.700 1791.400,490 1800.400,471.700 1818.200,475 1840.500,460 1862.900,450 1880.700,446 1900.800,448.300 1912,466.700 1920,461 1927,470 1931.500,461.700 1954.400,461.700 1963,466.700 1977.400,455 1991.800,461.700 2023.300,460 2032,473.300 2052,470 2072,486 2086.500,460 2101.400,453.300 2106.600,480 2141,490 2175.500,480 2189.800,485 2201.300,476.700 2224.300,483.300 2232.900,495 2241.500,496.700 2264.400,489.300 2287.400,500 2321.800,491.700 2342,481.700 2353.400,490 2362,508.300 2373.500,498.300 2393.600,510 2419.400,508.300 2436.600,520 2479.700,523.300 2499.800,540 2505.500,544 2528.500,543.300 2548.600,547.300 2563,541.700 2591.600,548.300 2617.500,541.700 2631.800,560.700 2646.200,548.300 2660.500,560 2677.800,551.700 2695,562.300 2718,543.300 2728,538.300"/>
<!-- frame -->
<rect x="1236.500" y="52.500" width="1868" height="900" fill="none" stroke="#fff"/>
<path d="M1269.500 953v4M1333.500 953v4M1397.500 953v4M1461.500 953v4M1525.500 953v4M1589.500 953v4M1653.500 953v4M1717.500 953v4M1781.500 953v4M1845.500 953v4M1909.500 953v4M1973.500 953v4M2037.500 953v4M2101.500 953v4M2165.500 953v4M2229.500 953v4M2293.500 953v4M2357.500 953v4M2421.500 953v4M2485.500 953v4M2549.500 953v4M2613.500 953v4M2677.500 953v4M2741.500 953v4" stroke="#fff"/>
<path d="M2725 53h9l-4.500 7z" fill="#778899"/>
<path d="M1240 56l10 0-5 7z" fill="#fff"/>

<!-- chart header -->
<text class="o" x="1255" y="63">AUDCAD,M5 0.89787 0.89815 0.89740 0.89799</text>
<text class="o" x="1245" y="77">ProfitB: -0.81 ProfitS: -73.44 MODE_MAXLOT = 1000</text>
<text class="o" x="3086" y="66" text-anchor="end">EA Limits Stops Orders Trail buy sell v.01</text>
<circle cx="3094" cy="62" r="5" fill="none" stroke="#fff"/><path d="M3091.500 63.500q2.500 2.500 5 0M3092 60h1M3095 60h1" stroke="#fff" fill="none"/>

<!-- order labels -->
<text class="o" x="1243" y="66">#369786111 buy stop 0.01</text>
<text class="o" x="1244" y="108">#369786065 buy stop 0.00</text><text class="o" x="1243" y="110">#369984177 sell limit 13.98</text>
<text class="o" x="1243" y="151">#369786064 buy stop 0.01</text>
<text class="o" x="1243" y="167">#369984176 sell limit 7.74</text>
<text class="o" x="1243" y="192">#369786063 buy stop 0.01</text>
<text class="o" x="1243" y="220">#369984175 sell limit 4.30</text>
<text class="o" x="1243" y="235">#369786062 buy stop 0.01</text>
<text class="o" x="1243" y="263">#369984174 sell limit 2.39</text>
<text class="o" x="1243" y="273">#369786061 buy stop 0.01</text>
<text class="o" x="1243" y="307">#369984173 sell limit 1.33</text>
<text class="o" x="1243" y="317">#369786060 buy stop 0.01</text>
<text class="o" x="1243" y="347">#369984172 sell limit 0.74</text>
<text class="o" x="1243" y="359">#369786059 buy stop 0.01</text>
<text class="o" x="1243" y="385">#369984170 sell limit 0.41</text>
<text class="o" x="1243" y="404">#369786058 buy stop 0.01</text>
<text class="o" x="1243" y="417">#369984169 sell limit 0.23</text>
<text class="o" x="1243" y="422">#369786056 buy stop 0.02</text>
<text class="o" x="1243" y="446">#369984168 sell limit 0.04</text><text class="o" x="1243" y="446">#369786057 buy stop 0.01</text><text class="o" x="1243.500" y="446">#369786264 buy limit 0.01</text>
<text class="o" x="1243" y="468">#369786265 buy 0.02</text>
<text class="o" x="1243" y="473">#369984167 sell limit 0.07</text><text class="o" x="1243" y="474">#369786763 buy stop 0.07</text>
<text class="o" x="1243" y="491">#369786266 buy 0.04</text><text class="o" x="1243.500" y="491">#369984166 sell 0.04</text>
<text class="o" x="1243" y="498">#369984165 sell stop 0.03</text><text class="o" x="1243" y="498">#369786055 buy stop 0.03</text>
<text class="o" x="1243" y="516">#369786267 buy 0.07</text>
<text class="o" x="1243" y="519">#369984164 sell limit 0.02</text>
<text class="o" x="1243" y="541">#369984188 sell 0.03</text><text class="o" x="1243" y="541">#369786123 buy 0.01</text>
<text class="o" x="1243" y="550">#369293831 sell 0.02</text>
<text class="o" x="1243" y="556">#369558480 sell 0.01</text>
<text class="o" x="1243" y="572">#369786268 buy limit 0.23</text><text class="o" x="1243" y="572">#369298288 buy 0.01</text>
<text class="o" x="1243" y="584">#369984124 sell stop 0.01</text>
<text class="o" x="1243" y="603">#369786270 buy limit 0.41</text>
<text class="o" x="1243" y="626">#369984125 sell stop 0.01</text>
<text class="o" x="1243" y="640">#369786271 buy limit 0.74</text>
<text class="o" x="1243" y="668">#369984126 sell stop 0.01</text>
<text class="o" x="1243" y="678">#369786272 buy limit 1.33</text>
<text class="o" x="1243" y="709">#369984127 sell stop 0.01</text>
<text class="o" x="1243" y="721">#369786273 buy limit 2.39</text>
<text class="o" x="1243" y="751">#369984129 sell stop 0.01</text>
<text class="o" x="1243" y="767">#369786274 buy limit 4.30</text>
<text class="o" x="1243" y="793">#369984130 sell stop 0.01</text>
<text class="o" x="1243" y="824">#369786276 buy limit 7.74</text>
<text class="o" x="1243" y="836">#369984131 sell stop 0.01</text>
<text class="o" x="1243" y="878">#369984133 sell stop 0.01</text><text class="o" x="1243.500" y="878">#369786278 buy limit 13.93</text>
<text class="o" x="1243" y="921">#369984134 sell stop 0.01</text>
<text class="o" x="1243" y="942">#369786279 buy limit 25.07</text>

<!-- cursor -->
<ellipse cx="1530" cy="522" rx="9.500" ry="9.500" fill="#8a8078"/><path d="M1526 519h4v-3l5 6-5 6v-3h-4z" fill="#ff1a8c" stroke="#fff" stroke-width=".8"/>

<!-- price axis -->
<path d="M3105 58.500h3M3105 91.500h3M3105 124.500h3M3105 157.500h3M3105 190.500h3M3105 223.500h3M3105 256.500h3M3105 289.500h3M3105 322.500h3M3105 355.500h3M3105 388.500h3M3105 421.500h3M3105 454.500h3M3105 487.500h3M3105 521.500h3M3105 553.500h3M3105 586.500h3M3105 619.500h3M3105 652.500h3M3105 685.500h3M3105 718.500h3M3105 751.500h3M3105 784.500h3M3105 817.500h3M3105 850.500h3M3105 883.500h3M3105 916.500h3M3105 949.500h3" stroke="#fff"/>
<text class="ax" x="3110" y="62">0.95110</text><text class="ax" x="3110" y="95">0.94750</text><text class="ax" x="3110" y="128">0.94380</text><text class="ax" x="3110" y="161">0.94020</text><text class="ax" x="3110" y="194">0.93650</text><text class="ax" x="3110" y="227">0.93290</text><text class="ax" x="3110" y="260">0.92920</text><text class="ax" x="3110" y="293">0.92560</text><text class="ax" x="3110" y="326">0.92190</text><text class="ax" x="3110" y="359">0.91830</text><text class="ax" x="3110" y="392">0.91460</text><text class="ax" x="3110" y="425">0.91100</text><text class="ax" x="3110" y="458">0.90740</text><text class="ax" x="3110" y="491">0.90370</text><text class="ax" x="3110" y="524">0.90010</text><text class="ax" x="3110" y="557">0.89640</text><text class="ax" x="3110" y="590">0.89280</text><text class="ax" x="3110" y="623">0.88910</text><text class="ax" x="3110" y="656">0.88550</text><text class="ax" x="3110" y="689">0.88190</text><text class="ax" x="3110" y="722">0.87820</text><text class="ax" x="3110" y="755">0.87460</text><text class="ax" x="3110" y="788">0.87090</text><text class="ax" x="3110" y="821">0.86730</text><text class="ax" x="3110" y="854">0.86360</text><text class="ax" x="3110" y="887">0.86000</text><text class="ax" x="3110" y="920">0.85630</text><text class="ax" x="3110" y="953">0.85270</text>
<rect x="3106" y="535" width="41" height="10" fill="#fff"/><text x="3110" y="544" font-size="10" fill="#000" letter-spacing="-.2">0.89799</text>

<!-- time axis -->
<text class="tm" x="1235" y="966">21 Feb 2025</text><text class="tm" x="1300" y="966">21 Feb 22:20</text><text class="tm" x="1364" y="966">24 Feb 04:40</text><text class="tm" x="1428" y="966">24 Feb 10:00</text><text class="tm" x="1492" y="966">24 Feb 15:20</text><text class="tm" x="1556" y="966">24 Feb 20:40</text><text class="tm" x="1620" y="966">25 Feb 02:10</text><text class="tm" x="1684" y="966">25 Feb 07:30</text><text class="tm" x="1748" y="966">25 Feb 12:50</text><text class="tm" x="1812" y="966">25 Feb 18:10</text><text class="tm" x="1876" y="966">25 Feb 23:40</text><text class="tm" x="1940" y="966">26 Feb 05:00</text><text class="tm" x="2004" y="966">26 Feb 10:20</text><text class="tm" x="2068" y="966">26 Feb 15:40</text><text class="tm" x="2132" y="966">26 Feb 21:00</text><text class="tm" x="2196" y="966">27 Feb 02:30</text><text class="tm" x="2260" y="966">27 Feb 07:50</text><text class="tm" x="2324" y="966">27 Feb 13:10</text><text class="tm" x="2388" y="966">27 Feb 18:30</text><text class="tm" x="2452" y="966">28 Feb 00:00</text><text class="tm" x="2516" y="966">28 Feb 05:20</text><text class="tm" x="2580" y="966">28 Feb 10:40</text><text class="tm" x="2645" y="966">28 Feb 16:00</text><text class="tm" x="2708" y="966">28 Feb 21:20</text>

<!-- windows watermark -->
<text x="2624" y="944" font-size="20" fill="#6e6e6e">Активация Windows</text>
<text x="2624" y="966" font-size="15.700" fill="#5c5c5c">Чтобы активировать Windows, перейдите в раздел "Параметры".</text>

<!-- Tabs -->
<rect x="1232" y="973" width="1918" height="22" fill="#fafafa"/>
<path d="M1232 973.500H3150" stroke="#fff"/>
<path d="M1232 994.500H3150" stroke="#d4d4d4"/>
<path d="M1330.500 978v15M1422.500 978v15M1499.500 978v15M1586.500 978v15M1678.500 978v15M1770.500 978v15M1862.500 978v15M1950.500 978v15M2047.500 978v15M2138.500 978v15M2226.500 978v15M2319.500 978v15M2414.500 978v15M2502.500 978v15M2586.500 978v15M2678.500 978v15M2935.500 978v15M3014.500 978v15M3091.500 978v15" stroke="#999"/>
<path d="M2758.500 994V975.500H2850.500V994" fill="#fff" stroke="#222"/><path d="M2758 995h93" stroke="#222" stroke-width="1.500"/>
<text class="tab" x="1251" y="989">AUDJPY,M15</text><text class="tab" x="1341" y="989">EURUSD,M15</text><text class="tab" x="1433" y="989">$USDX,H4</text><text class="tab" x="1508" y="989">CHFJPY,M15</text><text class="tab" x="1597" y="989">EURGBP,M15</text><text class="tab" x="1689" y="989">EURCHF,M15</text><text class="tab" x="1780" y="989">EURAUD,M30</text><text class="tab" x="1873" y="989">EURJPY,M30</text><text class="tab" x="1962" y="989">AUDUSD,M15</text><text class="tab" x="2058" y="989">AUDCAD,M5</text><text class="tab" x="2149" y="989">AUDUSD,M5</text><text class="tab" x="2237" y="989">EURUSD,M15</text><text class="tab" x="2329" y="989">CADCHF,M15</text><text class="tab" x="2425" y="989">AUDUSD,M5</text><text class="tab" x="2515" y="989">BTCUSD,H1</text><text class="tab" x="2598" y="989">AUDCAD,M5</text><text class="tab" x="2690" y="989">$US100,H1</text><text class="tab" x="2770" y="989" style="fill:#000">AUDCAD,M5</text><text class="tab" x="2861" y="989">EURUSD,H1</text><text class="tab" x="2946" y="989">$US500,H1</text><text class="tab" x="3024" y="989">$USDX,H1</text>
<path d="M3123 981l-4 4 4 4z" fill="#333"/><path d="M3139 981l4 4-4 4z" fill="#888"/>

<!-- Status bar -->
<text x="1234" y="1012" font-size="12" fill="#111" letter-spacing="-.2">Для вызова справки нажмите F1</text>
<text x="2445" y="1012" font-size="12" fill="#111" letter-spacing="-.2">Default</text>
<path d="M2440.500 997v20M2555.500 997v20M2658.500 997v20M2729.500 997v20M2800.500 997v20M2868.500 997v20M2938.500 997v20M3004.500 997v20" stroke="#a8a8a8"/>
<path d="M3010 1014v-2M3012.500 1014v-4M3015 1014v-5M3017.500 1014v-6M3020 1014v-8M3022.500 1014v-9M3025 1014v-10M3027.500 1014v-11M3030 1014v-12" stroke="#6a8a20" stroke-width="1.600"/><path d="M3022.500 1014v-5M3025 1014v-5M3027.500 1014v-6M3030 1014v-7" stroke="#1a5a9a" stroke-width="1.600"/>
<text x="3036" y="1012" font-size="12" fill="#111" letter-spacing="-.2">985/11 kb</text>

<!-- bottom wallpaper -->
<rect x="1232" y="1018" width="1918" height="8" fill="#3a2e24"/>
<rect x="1232" y="1018" width="48" height="8" fill="#1a2020"/>
<rect x="1280" y="1018" width="287" height="8" fill="#f8f8f8"/>
<path d="M1495 1026q3-7 8-6 4-2 7 0 4-1 7 6zM1526 1026q2-5 5-4 3-2 5 4z" fill="#d8c060"/>
<rect x="2051" y="1018" width="47" height="8" fill="#6a5a50"/>
<rect x="2400" y="1018" width="750" height="8" fill="#2c241c"/>
<text x="3054" y="1029" font-size="10" fill="#fff">15:35</text>
</svg>
</body></html>
